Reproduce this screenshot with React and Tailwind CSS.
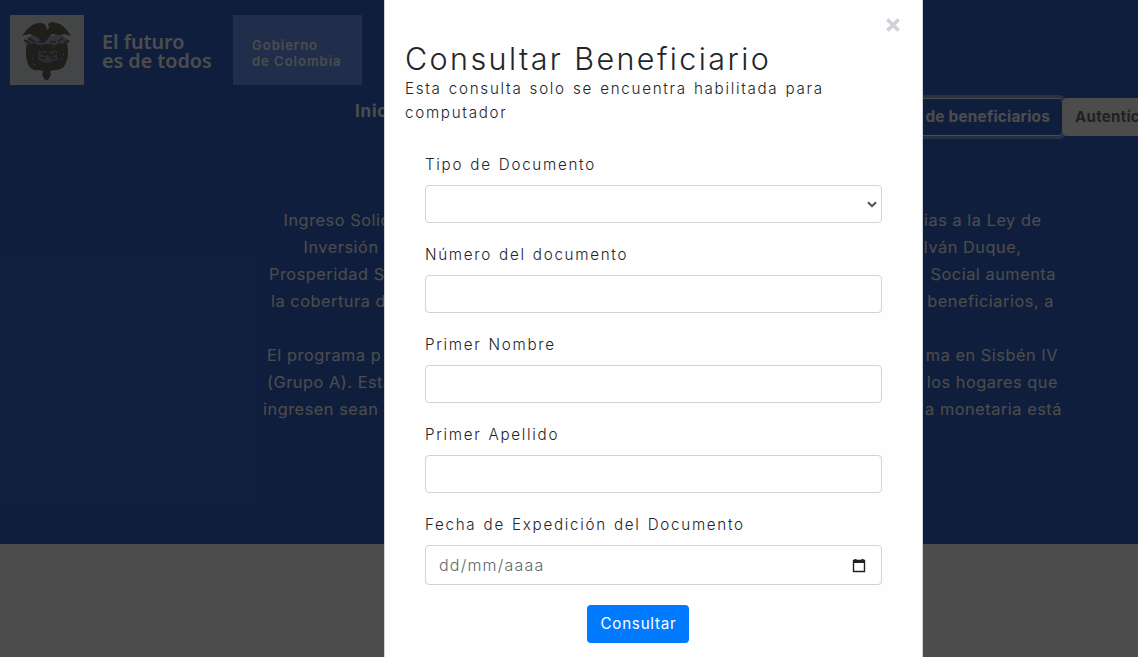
const introLines = [
  { left: 'Ingreso Solid', right: 'ias a la Ley de', width: 'w-[758px]' },
  { left: 'Inversión', right: 'Iván Duque,', width: 'w-[718px]' },
  { left: 'Prosperidad S', right: 'Social aumenta', width: 'w-[787px]' },
  { left: 'la cobertura d', right: 'beneficiarios, a', width: 'w-[783px]' },
  { left: '', right: '', width: 'w-[782px]' },
  { left: 'El programa p', right: 'ma en Sisbén IV', width: 'w-[791px]' },
  { left: '(Grupo A). Esta', right: 'los hogares que', width: 'w-[791px]' },
  { left: 'ingresen sean', right: 'a monetaria está', width: 'w-[799px]' },
];

function Emblem() {
  return (
    <svg viewBox="0 0 74 70" className="h-[70px] w-[74px] shrink-0">
      <rect width="74" height="70" fill="#e4e8ee" />
      <path d="M14 27l9-8 14 3 14-3 9 8-9 7-15-3-14 3z" fill="#a3adbb" />
      <g fill="#6d6654">
        <path d="M12 21C17 14 22 8 30 8c3 0 5 1 6 3l1 4 2-2-1-4c2-2 5-2 8-1 7 1 11 7 15 13l-7-2-5 1-7-1-3 3-3 4h-5l-4-4-7-3-5 1z" />
        <path d="M17 29l9-1 2 2 9-1 9 1 3-2 8 1c2 8 1 15-2 21-2 4-6 5-11 5l-4 1 1 4-3 5h-3l-3-5 1-4-4-1c-5 1-9-1-11-6-2-6-3-13-1-20z" />
      </g>
      <path d="M14 25l6 3M18 23l7 4M53 23l-5 4M59 25l-5 3" stroke="#6d6654" strokeWidth="1.5" />
      <path d="M24 31l2 8v8l6 6M50 31l-1 8-1 8-6 6" fill="none" stroke="#3366cc" strokeWidth="1.2" strokeDasharray="3 2" />
      <path d="M28 27h7M40 27h6M34 48h6M35 61h3" stroke="#3366cc" strokeWidth="1.6" />
      <path d="M28 36h19v9l-8 3h-4l-7-3z" fill="#8b909a" />
      <path d="M31 38l5 2 2-3 2 4 6-3M31 43h4M41 43h4" fill="none" stroke="#6d6654" strokeWidth="2" />
      <g fill="#e8e8df">
        <rect x="22" y="43" width="1" height="1" />
        <rect x="24" y="49" width="1" height="1" />
        <rect x="51" y="44" width="1" height="1" />
        <rect x="53" y="39" width="1" height="1" />
        <rect x="31" y="31" width="1" height="1" />
        <rect x="43" y="31" width="1" height="1" />
      </g>
    </svg>
  );
}

function Field({ label, children }) {
  return (
    <label className="block">
      <span className="block h-6 text-[15.2px] leading-6 tracking-[1.7px] whitespace-nowrap [word-spacing:1.2px]">{label}</span>
      <div className="mt-2">{children}</div>
    </label>
  );
}

const inputClass = 'block h-[38px] w-full rounded-[4px] border border-[#ced4da] bg-white outline-none';

function Page() {
  return (
    <div className="h-[657px] bg-white text-white">
      <div className="flex h-[544px] flex-col bg-[#3366cc]">
        <header className="flex h-[85px] items-end pl-2.5">
          <Emblem />
          <div className="ml-[18px] flex h-[70px] w-[131px] flex-col justify-center pt-px font-['Noto_Sans',sans-serif] text-[19.7px] leading-[19px] font-semibold whitespace-nowrap">
            <span>El futuro</span>
            <span>es de todos</span>
          </div>
          <div className="flex h-[70px] w-[129px] flex-col justify-center bg-[#6b99fa] pt-[7px] pl-[19px] text-[13px] leading-[15.5px] font-semibold tracking-[1px] whitespace-nowrap">
            <span>Gobierno</span>
            <span>de Colombia</span>
          </div>
        </header>
        <nav className="mt-[13px] flex h-[38px] pl-[355px] font-bold whitespace-nowrap">
          <span className="w-[350px] pt-[1px] text-[17px] tracking-[0.8px]">Inicio</span>
          <span className="flex w-[358px] items-center justify-end rounded-[4px] border border-white pr-[12px] text-[15.3px] tracking-[0.25px] ring-[3px] ring-white/40">
            de beneficiarios
          </span>
          <span className="flex flex-1 items-center overflow-hidden rounded-l-[4px] bg-white pl-[12px] text-[15px] tracking-[0.3px] text-[#6f6f6f]">
            Autentíc
          </span>
        </nav>
        <div className="mt-[71px] ml-[263px] w-[799px] text-[16.3px] leading-[27px] tracking-[0.55px] whitespace-nowrap">
          {introLines.map((line, i) => (
            <div key={i} className={`mx-auto flex h-[27px] justify-between ${line.width}`}>
              <span>{line.left}</span>
              <span>{line.right}</span>
            </div>
          ))}
        </div>
      </div>
    </div>
  );
}

export default function App() {
  return (
    <main className="relative h-[657px] w-full overflow-hidden font-['Inter',sans-serif]">
      <Page />
      <div className="absolute inset-0 flex bg-black/70 pl-[384px]">
        <section className="h-full w-[539px] border-x border-[#ced4da] bg-[#fefefe] px-5 text-[#212529]">
          <div className="flex h-[42px] justify-end pt-[17px] pr-px">
            <svg viewBox="0 0 16 16" className="h-4 w-4" aria-label="Cerrar">
              <path d="M2.4 2.4L13.6 13.6M13.6 2.4L2.4 13.6" stroke="#ced1d8" strokeWidth="3.6" />
            </svg>
          </div>
          <h2 className="h-[35px] text-[30.5px] leading-[33px] font-[350] tracking-[2.4px] whitespace-nowrap">Consultar Beneficiario</h2>
          <p className="text-[15.2px] leading-6 font-[350] tracking-[1.7px] whitespace-nowrap [word-spacing:1.2px]">
            Esta consulta solo se encuentra habilitada para
            <br />
            computador
          </p>
          <form className="mt-[28px] flex flex-col gap-5 px-5 font-[350]">
            <Field label="Tipo de Documento">
              <div className={`${inputClass} flex items-center justify-end pr-1`}>
                <svg viewBox="0 0 10 7" className="h-[7px] w-[10px]">
                  <path d="M1 1.2L5 5.2L9 1.2" fill="none" stroke="#495057" strokeWidth="2" />
                </svg>
              </div>
            </Field>
            <Field label="Número del documento">
              <input className={inputClass} />
            </Field>
            <Field label="Primer Nombre">
              <input className={inputClass} />
            </Field>
            <Field label="Primer Apellido">
              <input className={inputClass} />
            </Field>
            <Field label="Fecha de Expedición del Documento">
              <div className="flex h-10 items-center justify-between rounded-[4px] border border-[#ced4da] bg-white pr-[15px] pl-[13px] text-[16px] tracking-[1.2px] text-[#60676e]">
                <span>dd/mm/aaaa</span>
                <svg viewBox="0 0 14 15" className="h-[15px] w-[14px]">
                  <path d="M1.5 2.5h11v11h-11z" fill="none" stroke="#212121" strokeWidth="1.4" />
                  <path d="M1 2h12v3H1zM2.5 1h2v2h-2zM9.5 1h2v2h-2z" fill="#212121" />
                </svg>
              </div>
            </Field>
            <button type="button" className="ml-[162px] h-[38px] w-[102px] rounded-[4px] bg-[#007bff] pl-px text-[15.2px] font-normal tracking-[0.75px] text-white">
              Consultar
            </button>
          </form>
        </section>
      </div>
    </main>
  );
}
